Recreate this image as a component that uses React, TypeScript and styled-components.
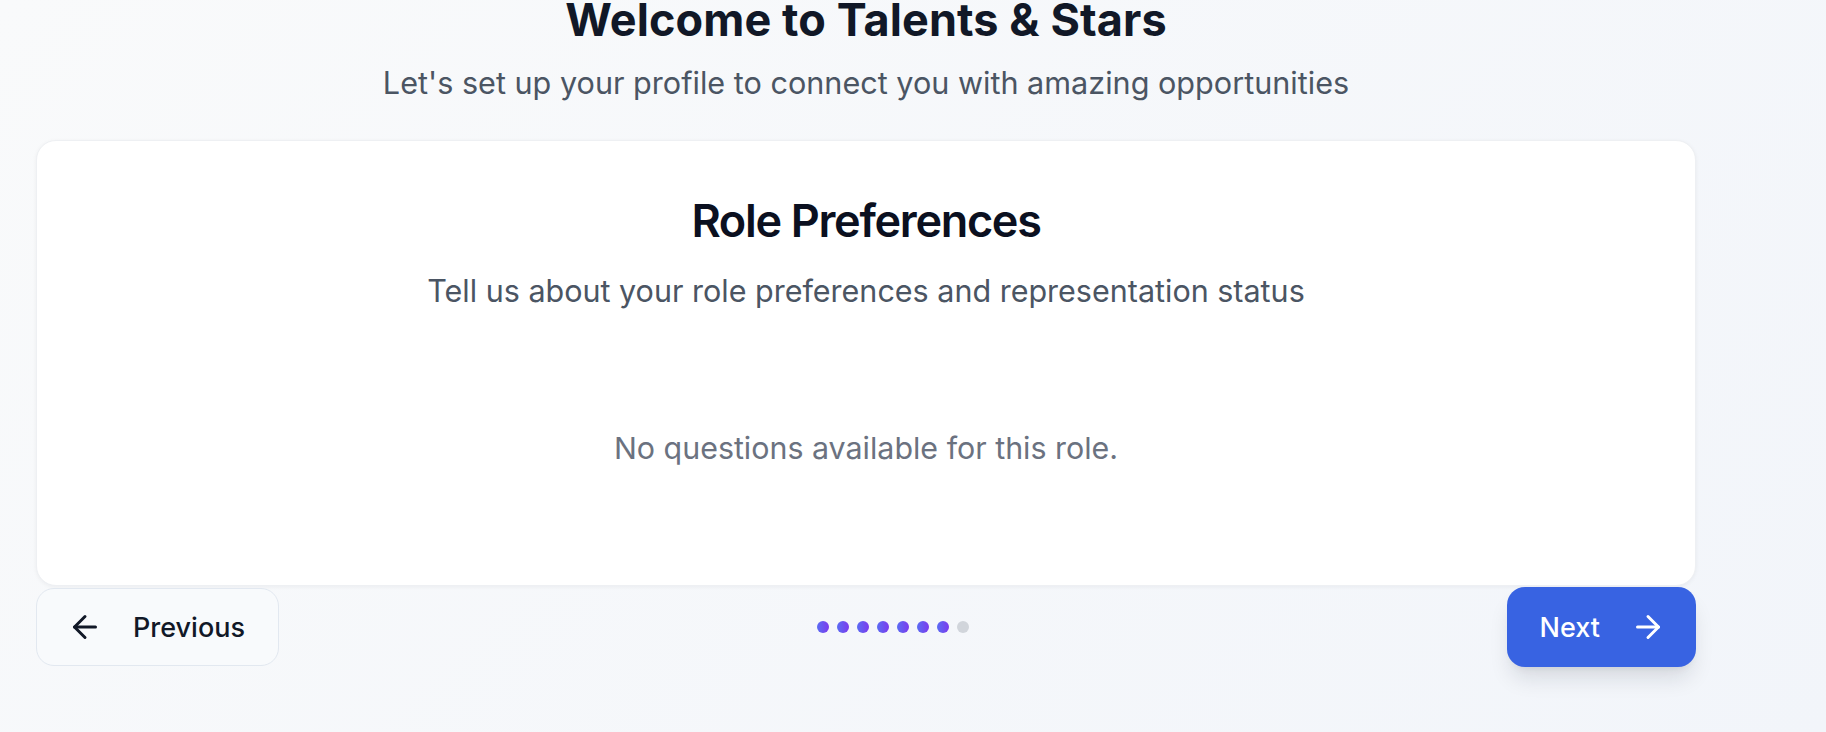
import styled, { createGlobalStyle } from 'styled-components';
import { ArrowLeft, ArrowRight } from 'lucide-react';

const GlobalStyle = createGlobalStyle`
  * { box-sizing: border-box; }
  body {
    margin: 0;
    font-family: Inter, "Noto Sans", "Liberation Sans", sans-serif;
    background: linear-gradient(135deg, #f9fafb 0%, #f2f5fa 100%);
    min-height: 100vh;
    overflow: hidden;
  }
`;

const TOTAL_STEPS = 8;
const CURRENT_STEP = 7;

const App = () => {
  return (
    <>
      <GlobalStyle />
      <Page>
        <Container>
          <Header>
            <Title>Welcome to Talents &amp; Stars</Title>
            <Subtitle>Let's set up your profile to connect you with amazing opportunities</Subtitle>
          </Header>

          <Card>
            <CardTitle>Role Preferences</CardTitle>
            <CardSubtitle>Tell us about your role preferences and representation status</CardSubtitle>
            <Empty>No questions available for this role.</Empty>
          </Card>

          <Footer>
            <PrevButton type="button">
              <ArrowLeft size={36} strokeWidth={2} />
              Previous
            </PrevButton>
            <Dots>
              {Array.from({ length: TOTAL_STEPS }).map((_, i) => (
                <Dot key={i} done={i < CURRENT_STEP} />
              ))}
            </Dots>
            <NextButton type="button">
              Next
              <ArrowRight size={36} strokeWidth={2} />
            </NextButton>
          </Footer>
        </Container>
      </Page>
    </>
  );
};

export default App;

const Page = styled.div`
  min-height: 100vh;
  padding-left: 36px;
`;

const Container = styled.div`
  width: 1660px;
  display: flex;
  flex-direction: column;
`;

const Header = styled.header`
  text-align: center;
  margin-top: -7px;
`;

const Title = styled.h1`
  margin: 0;
  font-size: 45px;
  line-height: 54px;
  font-weight: 700;
  color: #111827;
  letter-spacing: 0.1px;
`;

const Subtitle = styled.p`
  margin: 13px 0 0;
  font-size: 30.6px;
  line-height: 45px;
  color: #4b5563;
`;

const Card = styled.section`
  margin-top: 35px;
  background: #ffffff;
  border: 1px solid #eef0f3;
  border-radius: 20px;
  box-shadow: 0 1px 4px rgba(15, 23, 42, 0.05);
  padding: 53px 48px 48px;
  text-align: center;
`;

const CardTitle = styled.h2`
  margin: 0;
  font-size: 45px;
  line-height: 54px;
  font-weight: 600;
  color: #0b1020;
  letter-spacing: -1.3px;
`;

const CardSubtitle = styled.p`
  margin: 20px 0 0;
  font-size: 30.5px;
  line-height: 45px;
  color: #4b5563;
`;

const Empty = styled.p`
  margin: 0;
  padding: 113px 0 66px;
  font-size: 30.4px;
  line-height: 45px;
  color: #6b7280;
`;

const Footer = styled.div`
  margin-top: 1px;
  height: 80px;
  display: flex;
  align-items: center;
  justify-content: space-between;
`;

const PrevButton = styled.button`
  height: 78px;
  display: flex;
  align-items: center;
  gap: 30px;
  padding: 0 33px 0 30px;
  background: #f8fafc;
  border: 1px solid #e2e8f0;
  border-radius: 18px;
  font-family: inherit;
  font-size: 27px;
  font-weight: 500;
  color: #111827;
  cursor: pointer;
`;

const NextButton = styled.button`
  height: 80px;
  display: flex;
  align-items: center;
  gap: 30px;
  padding: 0 30px 0 33px;
  background: #3863e2;
  border: none;
  border-radius: 18px;
  font-family: inherit;
  font-size: 27px;
  font-weight: 500;
  color: #ffffff;
  cursor: pointer;
  box-shadow: 0 15px 22px -4px rgba(15, 23, 42, 0.12), 0 6px 9px -6px rgba(15, 23, 42, 0.1);
`;

const Dots = styled.div`
  display: flex;
  align-items: center;
  gap: 8px;
`;

const Dot = styled.span<{ done: boolean }>`
  width: 12px;
  height: 12px;
  border-radius: 50%;
  background: ${({ done }) => (done ? 'linear-gradient(90deg, #5a6cf3, #7c3aed)' : '#d1d5db')};
`;
